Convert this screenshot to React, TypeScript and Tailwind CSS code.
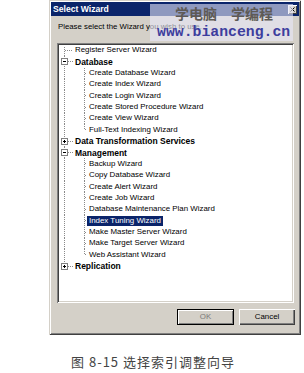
type Row = {
  label: string;
  level: 0 | 1;
  bold?: boolean;
  box?: 'plus' | 'minus';
  last?: boolean;
  selected?: boolean;
};

const ROWS: Row[] = [
  { label: 'Register Server Wizard', level: 0 },
  { label: 'Database', level: 0, bold: true, box: 'minus' },
  { label: 'Create Database Wizard', level: 1 },
  { label: 'Create Index Wizard', level: 1 },
  { label: 'Create Login Wizard', level: 1 },
  { label: 'Create Stored Procedure Wizard', level: 1 },
  { label: 'Create View Wizard', level: 1 },
  { label: 'Full-Text Indexing Wizard', level: 1, last: true },
  { label: 'Data Transformation Services', level: 0, bold: true, box: 'plus' },
  { label: 'Management', level: 0, bold: true, box: 'minus' },
  { label: 'Backup Wizard', level: 1 },
  { label: 'Copy Database Wizard', level: 1 },
  { label: 'Create Alert Wizard', level: 1 },
  { label: 'Create Job Wizard', level: 1 },
  { label: 'Database Maintenance Plan Wizard', level: 1 },
  { label: 'Index Tuning Wizard', level: 1, selected: true },
  { label: 'Make Master Server Wizard', level: 1 },
  { label: 'Make Target Server Wizard', level: 1 },
  { label: 'Web Assistant Wizard', level: 1, last: true },
  { label: 'Replication', level: 0, bold: true, box: 'plus', last: true },
];

const H = 11.35;
const C = 5.5;
const DOT = '#8a8a8a';

function Lines({ row, first }: { row: Row; first: boolean }) {
  const w = row.level === 0 ? 14 : 28;
  const rootEnd = row.level === 0 && row.last ? C : H;
  return (
    <svg width={w} height={H} className="shrink-0">
      <line x1={5.5} y1={first ? 2 : 0} x2={5.5} y2={rootEnd} stroke={DOT} strokeDasharray="1 1" />
      {row.level === 0 ? (
        <line x1={row.box ? 9 : 6} y1={C} x2={14} y2={C} stroke={DOT} strokeDasharray="1 1" />
      ) : (
        <>
          <line x1={25.5} y1={0} x2={25.5} y2={row.last ? C : H} stroke={DOT} strokeDasharray="1 1" />
          <line x1={26} y1={C} x2={28} y2={C} stroke={DOT} strokeDasharray="1 1" />
        </>
      )}
      {row.box && (
        <>
          <rect x={2.5} y={C - 3} width={6} height={6} fill="#fff" stroke="#808080" />
          <line x1={4} y1={C} x2={7} y2={C} stroke="#000" />
          {row.box === 'plus' && <line x1={5.5} y1={C - 1.5} x2={5.5} y2={C + 1.5} stroke="#000" />}
        </>
      )}
    </svg>
  );
}

export default function App() {
  return (
    <div className="relative w-[304px] h-[373px] bg-white overflow-hidden font-['Liberation_Sans',Arial,sans-serif]">
      {/* dialog */}
      <div className="ml-[49px] w-[252px] h-[335px] bg-[#d4d0c8] flex flex-col shadow-[inset_1px_1px_0_#d4d0c8,inset_-1px_-1px_0_#404040,inset_2px_2px_0_#ffffff,inset_-2px_-2px_0_#808080]">
        <div className="mx-[2px] mt-[2px] h-[14px] bg-[#0a246a] flex items-center justify-between pl-[2px] pr-[2px]">
          <span className="text-white font-bold text-[8.6px] leading-none">Select Wizard</span>
          <span className="w-[9px] h-[9px] bg-[#d4d0c8] flex items-center justify-center shadow-[inset_1px_1px_0_#ffffff,inset_-1px_-1px_0_#404040]">
            <svg width="5" height="5" viewBox="0 0 5 5">
              <path d="M0.5 0.5 L4.5 4.5 M4.5 0.5 L0.5 4.5" stroke="#000" strokeWidth="1" />
            </svg>
          </span>
        </div>

        <div className="ml-[9px] mt-[5px] h-[12px] leading-[12px] text-[7.8px] text-black">
          Please select the Wizard you wish to use.
        </div>

        <div className="ml-[8px] mt-[10px] w-[237px] h-[260px] bg-white p-[2px] overflow-hidden shadow-[inset_1px_1px_0_#808080,inset_-1px_-1px_0_#ffffff,inset_2px_2px_0_#404040,inset_-2px_-2px_0_#d4d0c8]">
          {ROWS.map((r, i) => (
            <div key={r.label} className="flex items-center h-[11.35px]">
              <Lines row={r} first={i === 0} />
              <span
                className={`px-[2px] h-[10.5px] leading-[10.5px] whitespace-nowrap ${
                  r.bold ? 'font-bold text-[8.5px]' : 'text-[7.9px]'
                } ${r.selected ? 'bg-[#0a246a] text-white' : 'text-black'}`}
              >
                {r.label}
              </span>
            </div>
          ))}
        </div>

        <div className="mt-[6px] mr-[6px] flex justify-end gap-[5px]">
          <button className="w-[57px] h-[16px] border border-black bg-[#d4d0c8] text-[7.9px] text-[#7a7a7a] shadow-[inset_1px_1px_0_#ffffff,inset_-1px_-1px_0_#808080]">
            OK
          </button>
          <button className="w-[56px] h-[16px] bg-[#d4d0c8] text-[7.9px] text-black shadow-[inset_1px_1px_0_#ffffff,inset_-1px_-1px_0_#404040,inset_-2px_-2px_0_#808080]">
            Cancel
          </button>
        </div>
      </div>

      {/* caption */}
      <div className="ml-[71px] mt-[19px] text-[13px] leading-[16px] tracking-[1px] text-[#444] font-['Noto_Sans_CJK_SC',sans-serif]">
        图 8-15 选择索引调整向导
      </div>

      {/* watermark */}
      <div className="absolute left-[150px] top-[4px] w-[143px] h-[37px] bg-[#e8e8f8]/60 flex flex-col">
        <div className="ml-[25px] mt-[2px] text-[14px] leading-[14px] font-bold text-[#5e5a55] font-['Noto_Sans_CJK_SC',sans-serif]">
          学电脑　学编程
        </div>
        <div className="ml-[7px] mt-[5px] text-[14.8px] leading-[15px] font-bold text-[#3d3d9e] font-['Liberation_Mono',monospace]">
          www.bianceng.cn
        </div>
      </div>
    </div>
  );
}
